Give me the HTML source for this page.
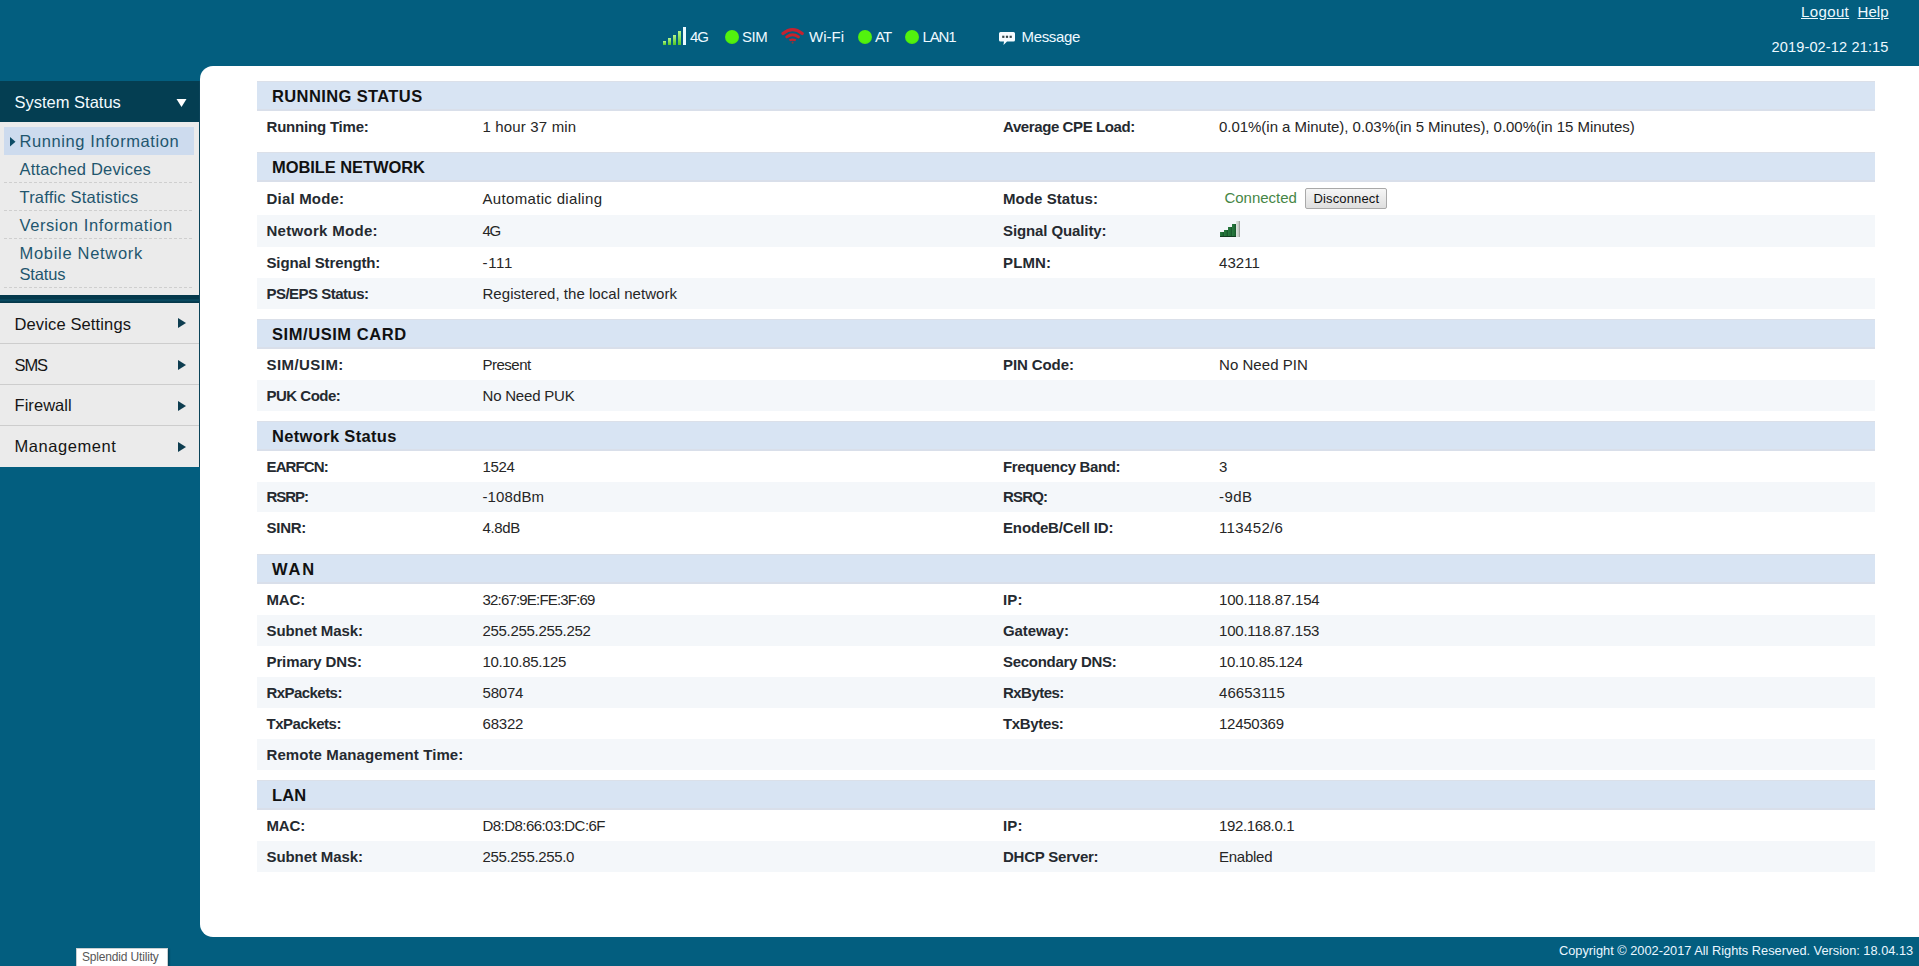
<!DOCTYPE html>
<html><head><meta charset="utf-8"><title>Router Status</title>
<style>
html,body{margin:0;padding:0;}
body{width:1919px;height:966px;overflow:hidden;position:relative;background:#035e7f;font-family:"Liberation Sans", sans-serif;}
.t{position:absolute;white-space:nowrap;}
.r{position:absolute;}
</style></head>
<body>
<div class="r" style="left:663px;top:41px;width:3px;height:4px;background:linear-gradient(#b4f78c,#53c726);"></div>
<div class="r" style="left:668px;top:38px;width:3px;height:7px;background:linear-gradient(#b4f78c,#53c726);"></div>
<div class="r" style="left:673px;top:35px;width:3px;height:10px;background:linear-gradient(#b4f78c,#53c726);"></div>
<div class="r" style="left:678px;top:31px;width:3px;height:14px;background:linear-gradient(#b4f78c,#53c726);"></div>
<div class="r" style="left:683px;top:27px;width:3px;height:18px;background:#eaf9ff;"></div>
<div class="t" id="f1" style="left:690px;top:26.80px;font-size:15px;line-height:20px;font-weight:normal;color:#eef9ff;letter-spacing:-1.000px;">4G</div>
<div class="r" style="left:724.5px;top:30px;width:14px;height:14px;background:radial-gradient(circle at 50% 45%, #52f20e 55%, #3fd10c 100%);border-radius:50%;"></div>
<div class="t" id="f2" style="left:742px;top:26.80px;font-size:15px;line-height:20px;font-weight:normal;color:#eef9ff;letter-spacing:-0.500px;">SIM</div>
<svg class="r" style="left:778px;top:24px" width="30" height="24" viewBox="0 0 30 24">
<path d="M5 9.6 Q14.6 1.8 24.2 9.6" stroke="#c42230" stroke-width="3.2" fill="none" stroke-linecap="round"/>
<path d="M8.8 12.9 Q14.6 8.6 20.4 12.9" stroke="#c8222a" stroke-width="3" fill="none" stroke-linecap="round"/>
<path d="M10.8 15.4 Q14.6 13.4 18.4 15.4 L17.2 17.2 Q14.6 16.2 12 17.2 Z" fill="#c4242c"/>
<circle cx="14.6" cy="18.6" r="1.1" fill="#8a3a3a"/>
</svg>
<div class="t" id="f3" style="left:809px;top:26.80px;font-size:15px;line-height:20px;font-weight:normal;color:#eef9ff;letter-spacing:0.000px;">Wi-Fi</div>
<div class="r" style="left:858px;top:30px;width:14px;height:14px;background:radial-gradient(circle at 50% 45%, #52f20e 55%, #3fd10c 100%);border-radius:50%;"></div>
<div class="t" id="f4" style="left:875px;top:26.80px;font-size:15px;line-height:20px;font-weight:normal;color:#eef9ff;letter-spacing:-0.800px;">AT</div>
<div class="r" style="left:905px;top:30px;width:14px;height:14px;background:radial-gradient(circle at 50% 45%, #52f20e 55%, #3fd10c 100%);border-radius:50%;"></div>
<div class="t" id="f5" style="left:922.5px;top:26.80px;font-size:15px;line-height:20px;font-weight:normal;color:#eef9ff;letter-spacing:-1.167px;">LAN1</div>
<svg class="r" style="left:998px;top:31px" width="18" height="15" viewBox="0 0 18 15">
<path d="M2.5 1 H15.5 Q17 1 17 2.5 V9 Q17 10.5 15.5 10.5 H9 L5.5 14 L6 10.5 H2.5 Q1 10.5 1 9 V2.5 Q1 1 2.5 1 Z" fill="#f4fbff"/>
<rect x="4.2" y="4.7" width="2.2" height="2.2" fill="#34454a"/><rect x="7.9" y="4.7" width="2.2" height="2.2" fill="#34454a"/><rect x="11.6" y="4.7" width="2.2" height="2.2" fill="#34454a"/>
</svg>
<div class="t" id="f6" style="left:1021.5px;top:26.80px;font-size:15px;line-height:20px;font-weight:normal;color:#eef9ff;letter-spacing:-0.333px;">Message</div>
<div class="t" id="f7" style="left:1801px;top:2.30px;font-size:15px;line-height:20px;font-weight:normal;color:#eef9ff;text-decoration:underline;letter-spacing:0.380px;">Logout</div>
<div class="t" id="f8" style="left:1857.5px;top:2.30px;font-size:15px;line-height:20px;font-weight:normal;color:#eef9ff;text-decoration:underline;letter-spacing:0.067px;">Help</div>
<div class="t" id="f9" style="left:1771.5px;top:37.94px;font-size:14.6px;line-height:19px;font-weight:normal;color:#eef9ff;letter-spacing:0.113px;">2019-02-12 21:15</div>
<div class="r" style="left:200px;top:66px;width:1719px;height:871px;background:#fff;border-radius:13px 0 0 13px;"></div>
<div class="r" style="left:0px;top:81px;width:199px;height:41px;background:#043e52;"></div>
<div class="t" id="f10" style="left:14.5px;top:91.78px;font-size:16.5px;line-height:21px;font-weight:normal;color:#f2fbff;letter-spacing:0.000px;">System Status</div>
<svg class="r" style="left:176px;top:98px" width="11" height="10" viewBox="0 0 11 10"><path d="M0.5 1 H10.5 L5.5 9 Z" fill="#fff"/></svg>
<div class="r" style="left:0px;top:122px;width:199px;height:173px;background:#ebebeb;"></div>
<div class="r" style="left:4px;top:127px;width:190px;height:28px;background:#cddbee;"></div>
<svg class="r" style="left:10px;top:137px" width="6" height="10" viewBox="0 0 6 10"><path d="M0 0 L5.5 4.7 L0 9.4 Z" fill="#0d4c66"/></svg>
<div class="t" id="f11" style="left:19.5px;top:131.38px;font-size:16.5px;line-height:21px;font-weight:normal;color:#1f566e;letter-spacing:0.589px;">Running Information</div>
<div class="t" id="f12" style="left:19.5px;top:158.98px;font-size:16.5px;line-height:21px;font-weight:normal;color:#1f566e;letter-spacing:0.193px;">Attached Devices</div>
<div class="t" id="f13" style="left:19.5px;top:186.88px;font-size:16.5px;line-height:21px;font-weight:normal;color:#1f566e;letter-spacing:0.191px;">Traffic Statistics</div>
<div class="t" id="f14" style="left:19.5px;top:214.88px;font-size:16.5px;line-height:21px;font-weight:normal;color:#1f566e;letter-spacing:0.583px;">Version Information</div>
<div class="t" id="f15" style="left:19.5px;top:243.08px;font-size:16.5px;line-height:21px;font-weight:normal;color:#1f566e;letter-spacing:0.700px;">Mobile Network</div>
<div class="t" id="f16" style="left:19.5px;top:264.08px;font-size:16.5px;line-height:21px;font-weight:normal;color:#1f566e;letter-spacing:-0.160px;">Status</div>
<div class="r" style="left:4px;top:182px;width:190px;height:1px;background:repeating-linear-gradient(90deg,#cfcfcf 0 3px,transparent 3px 5px);"></div>
<div class="r" style="left:4px;top:210px;width:190px;height:1px;background:repeating-linear-gradient(90deg,#cfcfcf 0 3px,transparent 3px 5px);"></div>
<div class="r" style="left:4px;top:238px;width:190px;height:1px;background:repeating-linear-gradient(90deg,#cfcfcf 0 3px,transparent 3px 5px);"></div>
<div class="r" style="left:4px;top:287px;width:190px;height:1px;background:repeating-linear-gradient(90deg,#cfcfcf 0 3px,transparent 3px 5px);"></div>
<div class="r" style="left:0px;top:295px;width:199px;height:8px;background:linear-gradient(#04384b 0,#04384b 4px,#0c5068 5px,#04384b 7px);"></div>
<div class="r" style="left:0px;top:303px;width:199px;height:164px;background:#ebebeb;"></div>
<div class="r" style="left:0px;top:343px;width:199px;height:1px;background:#cdcdcd;"></div>
<div class="r" style="left:0px;top:384px;width:199px;height:1px;background:#cdcdcd;"></div>
<div class="r" style="left:0px;top:425px;width:199px;height:1px;background:#cdcdcd;"></div>
<div class="t" id="f17" style="left:14.5px;top:313.58px;font-size:16.5px;line-height:21px;font-weight:normal;color:#151515;letter-spacing:0.129px;">Device Settings</div>
<svg class="r" style="left:178px;top:318px" width="9" height="10" viewBox="0 0 9 10"><path d="M0 0 L8 5 L0 10 Z" fill="#0e3d50"/></svg>
<div class="t" id="f18" style="left:14.5px;top:354.58px;font-size:16.5px;line-height:21px;font-weight:normal;color:#151515;letter-spacing:-1.100px;">SMS</div>
<svg class="r" style="left:178px;top:359.5px" width="9" height="10" viewBox="0 0 9 10"><path d="M0 0 L8 5 L0 10 Z" fill="#0e3d50"/></svg>
<div class="t" id="f19" style="left:14.5px;top:395.48px;font-size:16.5px;line-height:21px;font-weight:normal;color:#151515;letter-spacing:0.057px;">Firewall</div>
<svg class="r" style="left:178px;top:400.5px" width="9" height="10" viewBox="0 0 9 10"><path d="M0 0 L8 5 L0 10 Z" fill="#0e3d50"/></svg>
<div class="t" id="f20" style="left:14.5px;top:436.48px;font-size:16.5px;line-height:21px;font-weight:normal;color:#151515;letter-spacing:0.556px;">Management</div>
<svg class="r" style="left:178px;top:441.5px" width="9" height="10" viewBox="0 0 9 10"><path d="M0 0 L8 5 L0 10 Z" fill="#0e3d50"/></svg>
<div class="r" style="left:199px;top:81px;width:1px;height:386px;background:#0b4359;"></div>
<div class="r" style="left:257px;top:81px;width:1618px;height:30px;background:#d8e4f3;box-shadow:inset 0 -2px 0 #d9dfea, inset 0 1px 0 #dbe0e9;"></div>
<div class="t" id="f21" style="left:272px;top:85.50px;font-size:16.5px;line-height:21px;font-weight:bold;color:#111;letter-spacing:0.385px;">RUNNING STATUS</div>
<div class="t" id="f22" style="left:266.5px;top:116.50px;font-size:15px;line-height:20px;font-weight:bold;color:#252a30;letter-spacing:-0.200px;">Running Time:</div>
<div class="t" id="f23" style="left:482.5px;top:116.50px;font-size:15px;line-height:20px;font-weight:normal;color:#262626;letter-spacing:0.158px;">1 hour 37 min</div>
<div class="t" id="f24" style="left:1003px;top:116.50px;font-size:15px;line-height:20px;font-weight:bold;color:#252a30;letter-spacing:-0.400px;">Average CPE Load:</div>
<div class="t" id="f25" style="left:1219px;top:116.50px;font-size:15px;line-height:20px;font-weight:normal;color:#262626;letter-spacing:-0.033px;">0.01%(in a Minute), 0.03%(in 5 Minutes), 0.00%(in 15 Minutes)</div>
<div class="r" style="left:257px;top:152px;width:1618px;height:30px;background:#d8e4f3;box-shadow:inset 0 -2px 0 #d9dfea, inset 0 1px 0 #dbe0e9;"></div>
<div class="t" id="f26" style="left:272px;top:156.50px;font-size:16.5px;line-height:21px;font-weight:bold;color:#111;letter-spacing:-0.085px;">MOBILE NETWORK</div>
<div class="t" id="f27" style="left:266.5px;top:188.50px;font-size:15px;line-height:20px;font-weight:bold;color:#252a30;letter-spacing:0.194px;">Dial Mode:</div>
<div class="t" id="f28" style="left:482.5px;top:188.50px;font-size:15px;line-height:20px;font-weight:normal;color:#262626;letter-spacing:0.328px;">Automatic dialing</div>
<div class="t" id="f29" style="left:1003px;top:188.50px;font-size:15px;line-height:20px;font-weight:bold;color:#252a30;letter-spacing:0.068px;">Mode Status:</div>
<div class="t" id="f30" style="left:1224.5px;top:187.70px;font-size:15px;line-height:20px;font-weight:normal;color:#468646;letter-spacing:-0.031px;">Connected</div>
<div class="r" style="left:1305px;top:188px;width:80px;height:19px;border:1px solid #a9a9a9;border-radius:2px;background:linear-gradient(#f6f6f6,#dedede);"></div>
<div class="t" id="f31" style="left:1313.5px;top:189.99px;font-size:13px;line-height:17px;font-weight:normal;color:#111;letter-spacing:0.139px;">Disconnect</div>
<div class="r" style="left:257px;top:215px;width:1618px;height:32px;background:#f4f7fa;"></div>
<div class="t" id="f32" style="left:266.5px;top:221.00px;font-size:15px;line-height:20px;font-weight:bold;color:#252a30;letter-spacing:0.292px;">Network Mode:</div>
<div class="t" id="f33" style="left:482.5px;top:221.00px;font-size:15px;line-height:20px;font-weight:normal;color:#262626;letter-spacing:-1.250px;">4G</div>
<div class="t" id="f34" style="left:1003px;top:221.00px;font-size:15px;line-height:20px;font-weight:bold;color:#252a30;letter-spacing:-0.107px;">Signal Quality:</div>
<div class="r" style="left:1220px;top:232px;width:4px;height:5px;background:linear-gradient(90deg,#2a7a40,#1d6a33 70%,#174f2a);box-shadow:inset 0 -1px 0 #123d20;"></div>
<div class="r" style="left:1224px;top:230px;width:4px;height:7px;background:linear-gradient(90deg,#2a7a40,#1d6a33 70%,#174f2a);box-shadow:inset 0 -1px 0 #123d20;"></div>
<div class="r" style="left:1228px;top:227px;width:4px;height:10px;background:linear-gradient(90deg,#2a7a40,#1d6a33 70%,#174f2a);box-shadow:inset 0 -1px 0 #123d20;"></div>
<div class="r" style="left:1232px;top:224px;width:4px;height:13px;background:linear-gradient(90deg,#2a7a40,#1d6a33 70%,#174f2a);box-shadow:inset 0 -1px 0 #123d20;"></div>
<div class="r" style="left:1236px;top:221px;width:4px;height:16px;background:linear-gradient(90deg,#dfe6df,#c9cfc9 60%,#8f9090);"></div>
<div class="t" id="f35" style="left:266.5px;top:252.50px;font-size:15px;line-height:20px;font-weight:bold;color:#252a30;letter-spacing:-0.133px;">Signal Strength:</div>
<div class="t" id="f36" style="left:482.5px;top:252.50px;font-size:15px;line-height:20px;font-weight:normal;color:#262626;letter-spacing:0.667px;">-111</div>
<div class="t" id="f37" style="left:1003px;top:252.50px;font-size:15px;line-height:20px;font-weight:bold;color:#252a30;letter-spacing:0.125px;">PLMN:</div>
<div class="t" id="f38" style="left:1219px;top:252.50px;font-size:15px;line-height:20px;font-weight:normal;color:#262626;letter-spacing:0.062px;">43211</div>
<div class="r" style="left:257px;top:278px;width:1618px;height:31px;background:#f4f7fa;"></div>
<div class="t" id="f39" style="left:266.5px;top:283.50px;font-size:15px;line-height:20px;font-weight:bold;color:#252a30;letter-spacing:-0.519px;">PS/EPS Status:</div>
<div class="t" id="f40" style="left:482.5px;top:283.50px;font-size:15px;line-height:20px;font-weight:normal;color:#262626;letter-spacing:0.036px;">Registered, the local network</div>
<div class="r" style="left:257px;top:319px;width:1618px;height:30px;background:#d8e4f3;box-shadow:inset 0 -2px 0 #d9dfea, inset 0 1px 0 #dbe0e9;"></div>
<div class="t" id="f41" style="left:272px;top:323.50px;font-size:16.5px;line-height:21px;font-weight:bold;color:#111;letter-spacing:0.562px;">SIM/USIM CARD</div>
<div class="t" id="f42" style="left:266.5px;top:354.50px;font-size:15px;line-height:20px;font-weight:bold;color:#252a30;letter-spacing:0.438px;">SIM/USIM:</div>
<div class="t" id="f43" style="left:482.5px;top:354.50px;font-size:15px;line-height:20px;font-weight:normal;color:#262626;letter-spacing:-0.500px;">Present</div>
<div class="t" id="f44" style="left:1003px;top:354.50px;font-size:15px;line-height:20px;font-weight:bold;color:#252a30;letter-spacing:-0.094px;">PIN Code:</div>
<div class="t" id="f45" style="left:1219px;top:354.50px;font-size:15px;line-height:20px;font-weight:normal;color:#262626;letter-spacing:0.050px;">No Need PIN</div>
<div class="r" style="left:257px;top:380px;width:1618px;height:31px;background:#f4f7fa;"></div>
<div class="t" id="f46" style="left:266.5px;top:385.50px;font-size:15px;line-height:20px;font-weight:bold;color:#252a30;letter-spacing:-0.500px;">PUK Code:</div>
<div class="t" id="f47" style="left:482.5px;top:385.50px;font-size:15px;line-height:20px;font-weight:normal;color:#262626;letter-spacing:-0.200px;">No Need PUK</div>
<div class="r" style="left:257px;top:421px;width:1618px;height:30px;background:#d8e4f3;box-shadow:inset 0 -2px 0 #d9dfea, inset 0 1px 0 #dbe0e9;"></div>
<div class="t" id="f48" style="left:272px;top:425.50px;font-size:16.5px;line-height:21px;font-weight:bold;color:#111;letter-spacing:0.327px;">Network Status</div>
<div class="t" id="f49" style="left:266.5px;top:456.50px;font-size:15px;line-height:20px;font-weight:bold;color:#252a30;letter-spacing:-0.875px;">EARFCN:</div>
<div class="t" id="f50" style="left:482.5px;top:456.50px;font-size:15px;line-height:20px;font-weight:normal;color:#262626;letter-spacing:-0.333px;">1524</div>
<div class="t" id="f51" style="left:1003px;top:456.50px;font-size:15px;line-height:20px;font-weight:bold;color:#252a30;letter-spacing:-0.357px;">Frequency Band:</div>
<div class="t" style="left:1219px;top:456.50px;font-size:15px;line-height:20px;font-weight:normal;color:#262626;">3</div>
<div class="r" style="left:257px;top:482px;width:1618px;height:30px;background:#f4f7fa;"></div>
<div class="t" id="f52" style="left:266.5px;top:487.00px;font-size:15px;line-height:20px;font-weight:bold;color:#252a30;letter-spacing:-1.062px;">RSRP:</div>
<div class="t" id="f53" style="left:482.5px;top:487.00px;font-size:15px;line-height:20px;font-weight:normal;color:#262626;letter-spacing:0.125px;">-108dBm</div>
<div class="t" id="f54" style="left:1003px;top:487.00px;font-size:15px;line-height:20px;font-weight:bold;color:#252a30;letter-spacing:-0.812px;">RSRQ:</div>
<div class="t" id="f55" style="left:1219px;top:487.00px;font-size:15px;line-height:20px;font-weight:normal;color:#262626;letter-spacing:0.417px;">-9dB</div>
<div class="t" id="f56" style="left:266.5px;top:517.50px;font-size:15px;line-height:20px;font-weight:bold;color:#252a30;letter-spacing:-0.250px;">SINR:</div>
<div class="t" id="f57" style="left:482.5px;top:517.50px;font-size:15px;line-height:20px;font-weight:normal;color:#262626;letter-spacing:-0.375px;">4.8dB</div>
<div class="t" id="f58" style="left:1003px;top:517.50px;font-size:15px;line-height:20px;font-weight:bold;color:#252a30;letter-spacing:-0.143px;">EnodeB/Cell ID:</div>
<div class="t" id="f59" style="left:1219px;top:517.50px;font-size:15px;line-height:20px;font-weight:normal;color:#262626;letter-spacing:0.357px;">113452/6</div>
<div class="r" style="left:257px;top:554px;width:1618px;height:30px;background:#d8e4f3;box-shadow:inset 0 -2px 0 #d9dfea, inset 0 1px 0 #dbe0e9;"></div>
<div class="t" id="f60" style="left:272px;top:558.50px;font-size:16.5px;line-height:21px;font-weight:bold;color:#111;letter-spacing:1.875px;">WAN</div>
<div class="t" id="f61" style="left:266.5px;top:589.50px;font-size:15px;line-height:20px;font-weight:bold;color:#252a30;letter-spacing:-0.167px;">MAC:</div>
<div class="t" id="f62" style="left:482.5px;top:589.50px;font-size:15px;line-height:20px;font-weight:normal;color:#262626;letter-spacing:-0.812px;">32:67:9E:FE:3F:69</div>
<div class="t" id="f63" style="left:1003px;top:589.50px;font-size:15px;line-height:20px;font-weight:bold;color:#252a30;letter-spacing:0.125px;">IP:</div>
<div class="t" id="f64" style="left:1219px;top:589.50px;font-size:15px;line-height:20px;font-weight:normal;color:#262626;letter-spacing:-0.192px;">100.118.87.154</div>
<div class="r" style="left:257px;top:615px;width:1618px;height:31px;background:#f4f7fa;"></div>
<div class="t" id="f65" style="left:266.5px;top:620.50px;font-size:15px;line-height:20px;font-weight:bold;color:#252a30;letter-spacing:-0.091px;">Subnet Mask:</div>
<div class="t" id="f66" style="left:482.5px;top:620.50px;font-size:15px;line-height:20px;font-weight:normal;color:#262626;letter-spacing:-0.304px;">255.255.255.252</div>
<div class="t" id="f67" style="left:1003px;top:620.50px;font-size:15px;line-height:20px;font-weight:bold;color:#252a30;letter-spacing:-0.107px;">Gateway:</div>
<div class="t" id="f68" style="left:1219px;top:620.50px;font-size:15px;line-height:20px;font-weight:normal;color:#262626;letter-spacing:-0.212px;">100.118.87.153</div>
<div class="t" id="f69" style="left:266.5px;top:651.50px;font-size:15px;line-height:20px;font-weight:bold;color:#252a30;letter-spacing:-0.114px;">Primary DNS:</div>
<div class="t" id="f70" style="left:482.5px;top:651.50px;font-size:15px;line-height:20px;font-weight:normal;color:#262626;letter-spacing:-0.341px;">10.10.85.125</div>
<div class="t" id="f71" style="left:1003px;top:651.50px;font-size:15px;line-height:20px;font-weight:bold;color:#252a30;letter-spacing:-0.288px;">Secondary DNS:</div>
<div class="t" id="f72" style="left:1219px;top:651.50px;font-size:15px;line-height:20px;font-weight:normal;color:#262626;letter-spacing:-0.341px;">10.10.85.124</div>
<div class="r" style="left:257px;top:677px;width:1618px;height:31px;background:#f4f7fa;"></div>
<div class="t" id="f73" style="left:266.5px;top:682.50px;font-size:15px;line-height:20px;font-weight:bold;color:#252a30;letter-spacing:-0.556px;">RxPackets:</div>
<div class="t" id="f74" style="left:482.5px;top:682.50px;font-size:15px;line-height:20px;font-weight:normal;color:#262626;letter-spacing:-0.188px;">58074</div>
<div class="t" id="f75" style="left:1003px;top:682.50px;font-size:15px;line-height:20px;font-weight:bold;color:#252a30;letter-spacing:-0.536px;">RxBytes:</div>
<div class="t" id="f76" style="left:1219px;top:682.50px;font-size:15px;line-height:20px;font-weight:normal;color:#262626;letter-spacing:0.036px;">46653115</div>
<div class="t" id="f77" style="left:266.5px;top:713.50px;font-size:15px;line-height:20px;font-weight:bold;color:#252a30;letter-spacing:-0.472px;">TxPackets:</div>
<div class="t" id="f78" style="left:482.5px;top:713.50px;font-size:15px;line-height:20px;font-weight:normal;color:#262626;letter-spacing:-0.188px;">68322</div>
<div class="t" id="f79" style="left:1003px;top:713.50px;font-size:15px;line-height:20px;font-weight:bold;color:#252a30;letter-spacing:-0.357px;">TxBytes:</div>
<div class="t" id="f80" style="left:1219px;top:713.50px;font-size:15px;line-height:20px;font-weight:normal;color:#262626;letter-spacing:-0.250px;">12450369</div>
<div class="r" style="left:257px;top:739px;width:1618px;height:31px;background:#f4f7fa;"></div>
<div class="t" id="f81" style="left:266.5px;top:744.50px;font-size:15px;line-height:20px;font-weight:bold;color:#252a30;letter-spacing:0.091px;">Remote Management Time:</div>
<div class="t" style="left:482.5px;top:744.50px;font-size:15px;line-height:20px;font-weight:normal;color:#262626;"></div>
<div class="r" style="left:257px;top:780px;width:1618px;height:30px;background:#d8e4f3;box-shadow:inset 0 -2px 0 #d9dfea, inset 0 1px 0 #dbe0e9;"></div>
<div class="t" id="f82" style="left:272px;top:784.50px;font-size:16.5px;line-height:21px;font-weight:bold;color:#111;letter-spacing:0.125px;">LAN</div>
<div class="t" id="f83" style="left:266.5px;top:815.50px;font-size:15px;line-height:20px;font-weight:bold;color:#252a30;letter-spacing:-0.167px;">MAC:</div>
<div class="t" id="f84" style="left:482.5px;top:815.50px;font-size:15px;line-height:20px;font-weight:normal;color:#262626;letter-spacing:-0.547px;">D8:D8:66:03:DC:6F</div>
<div class="t" id="f85" style="left:1003px;top:815.50px;font-size:15px;line-height:20px;font-weight:bold;color:#252a30;letter-spacing:0.125px;">IP:</div>
<div class="t" id="f86" style="left:1219px;top:815.50px;font-size:15px;line-height:20px;font-weight:normal;color:#262626;letter-spacing:-0.375px;">192.168.0.1</div>
<div class="r" style="left:257px;top:841px;width:1618px;height:31px;background:#f4f7fa;"></div>
<div class="t" id="f87" style="left:266.5px;top:846.50px;font-size:15px;line-height:20px;font-weight:bold;color:#252a30;letter-spacing:-0.091px;">Subnet Mask:</div>
<div class="t" id="f88" style="left:482.5px;top:846.50px;font-size:15px;line-height:20px;font-weight:normal;color:#262626;letter-spacing:-0.333px;">255.255.255.0</div>
<div class="t" id="f89" style="left:1003px;top:846.50px;font-size:15px;line-height:20px;font-weight:bold;color:#252a30;letter-spacing:-0.227px;">DHCP Server:</div>
<div class="t" id="f90" style="left:1219px;top:846.50px;font-size:15px;line-height:20px;font-weight:normal;color:#262626;letter-spacing:-0.250px;">Enabled</div>
<div class="t" id="f91" style="left:1559px;top:941.66px;font-size:12.8px;line-height:17px;font-weight:normal;color:#eaf7ff;letter-spacing:-0.005px;">Copyright &copy; 2002-2017 All Rights Reserved. Version: 18.04.13</div>
<div class="r" style="left:76px;top:948px;width:90px;height:22px;background:#fff;border:1px solid #c9cfd2;box-shadow:1px 1px 2px rgba(0,0,0,0.4);"></div>
<div class="t" id="f92" style="left:82px;top:948.84px;font-size:12px;line-height:16px;font-weight:normal;color:#575757;letter-spacing:-0.167px;">Splendid Utility</div>

</body></html>
